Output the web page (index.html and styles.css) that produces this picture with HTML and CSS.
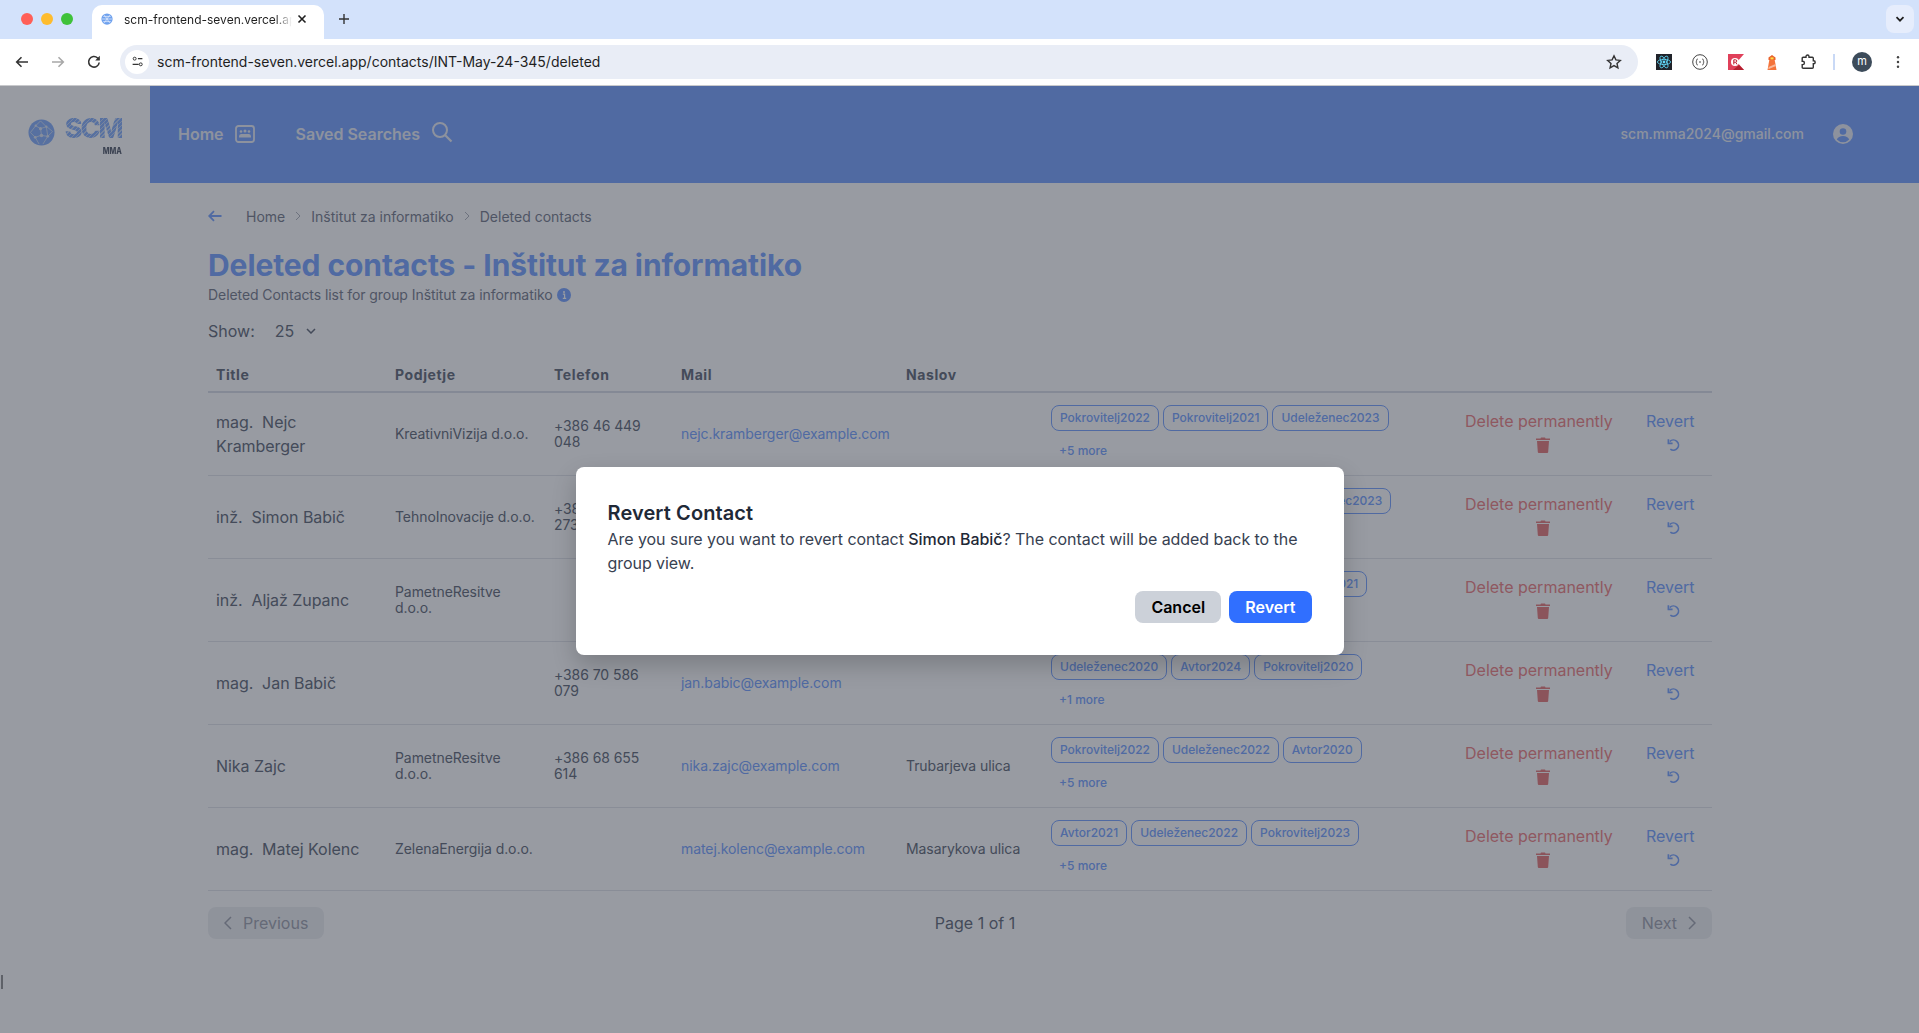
FILE: index.html
```html
<!DOCTYPE html>
<html>
<head>
  <title>Deleted contacts</title>
  <link rel="stylesheet" href="styles.css">
</head>
<body>
  <div class="browser">
    <div class="tabbar">
      <div class="lights">
        <span class="light red"></span>
        <span class="light yellow"></span>
        <span class="light green"></span>
      </div>
      <div class="tab">
        <svg class="favicon" viewBox="0 0 16 16"><circle cx="8" cy="8" r="7.500" fill="#6ea1ee"/><path d="M4.500 3l3.500 5-3.500 5M11.500 3L8 8l3.500 5M1.500 8h13M3 4.500h10M3 11.500h10" stroke="#dbe7fb" stroke-width="1.100" fill="none"/></svg>
        <span class="tab-title">scm-frontend-seven.vercel.app</span>
        <svg class="tab-close" viewBox="0 0 12 12"><path d="M2.500 2.500l7 7M9.500 2.500l-7 7" stroke="#1f1f1f" stroke-width="1.600"/></svg>
      </div>
      <svg class="tab-new" viewBox="0 0 12 12"><path d="M6 1v10M1 6h10" stroke="#333" stroke-width="1.400"/></svg>
      <div class="tab-list">
        <svg viewBox="0 0 12 12"><path d="M2.500 4.200L6 7.700l3.500-3.500" stroke="#1f1f1f" stroke-width="1.700" fill="none"/></svg>
      </div>
    </div>
    <div class="toolbar">
      <svg class="tool" viewBox="0 0 16 16"><path d="M14 8H3M7.500 3.200L2.700 8l4.800 4.800" stroke="#333" stroke-width="1.600" fill="none"/></svg>
      <svg class="tool" viewBox="0 0 16 16"><path d="M2 8h11M8.500 3.200L13.300 8l-4.800 4.800" stroke="#a8a8a8" stroke-width="1.600" fill="none"/></svg>
      <svg class="tool" viewBox="0 0 16 16"><path d="M13.200 8.500A5.300 5.300 0 1 1 11.600 4l1.600 1.500" stroke="#333" stroke-width="1.600" fill="none"/><path d="M13.800 1.800v4.600H9.200z" fill="#333"/></svg>
      <div class="omnibox">
        <span class="site-icon">
          <svg viewBox="0 0 16 16"><circle cx="4.500" cy="4.500" r="1.800" stroke="#333" stroke-width="1.200" fill="none"/><path d="M8.500 4.500H14M2 11.500h7.500" stroke="#333" stroke-width="1.400"/><circle cx="12" cy="11.500" r="1.800" stroke="#333" stroke-width="1.200" fill="none"/></svg>
        </span>
        <span class="url">scm-frontend-seven.vercel.app/contacts/INT-May-24-345/deleted</span>
        <svg class="star" viewBox="0 0 16 16"><path d="M8 1.800l1.900 4.100 4.400.5-3.300 3 .9 4.400L8 11.600l-3.900 2.200.9-4.400-3.300-3 4.400-.5z" stroke="#333" stroke-width="1.400" fill="none"/></svg>
      </div>
      <div class="extensions">
        <svg class="ext" viewBox="0 0 16 16"><rect width="16" height="16" fill="#20232a"/><g stroke="#61dafb" stroke-width=".8" fill="none"><ellipse cx="8" cy="8" rx="6.600" ry="2.600"/><ellipse cx="8" cy="8" rx="6.600" ry="2.600" transform="rotate(60 8 8)"/><ellipse cx="8" cy="8" rx="6.600" ry="2.600" transform="rotate(120 8 8)"/></g><circle cx="8" cy="8" r="1.400" fill="#61dafb"/></svg>
        <svg class="ext" viewBox="0 0 16 16"><circle cx="8" cy="8" r="7.300" stroke="#444" stroke-width="1" fill="none"/><path d="M5.800 5Q4.600 5 4.600 6.200v1.200L3.800 8l.8.600v1.200q0 1.200 1.200 1.200M10.200 5q1.200 0 1.200 1.200v1.200l.8.600-.8.600v1.200q0 1.200-1.200 1.200" stroke="#444" stroke-width=".9" fill="none"/><path d="M7 8h2" stroke="#444" stroke-width="1"/></svg>
        <svg class="ext" viewBox="0 0 16 16"><rect width="16" height="16" fill="#e0405a"/><path d="M16 0L9 8l7 8z" fill="#fff"/><path d="M5 16h11l-5-5z" fill="#b3202f"/><circle cx="7" cy="8" r="4" fill="#fff"/><path d="M5.800 10.400V5.800h1.700q1.300 0 1.300 1.200 0 1-1.200 1.200l1.400 2.200M5.800 8.200h1.600" stroke="#c0182c" stroke-width="1" fill="none"/></svg>
        <svg class="ext" viewBox="0 0 16 16"><path d="M5.500 5h5l2 11h-9z" fill="#f4733a"/><path d="M4.500 3.500L8 1l3.500 2.500V6h-7z" fill="#e9612a"/><rect x="6.500" y="3.400" width="3" height="2" fill="#fde047"/><path d="M4.600 13l7-3 .3 2-7.600 3.200z" fill="#f9b99b"/></svg>
        <svg class="ext" viewBox="0 0 16 16"><path d="M6 3.200V2.500a1.500 1.500 0 0 1 3 0v.7h3.300q1 0 1 1v2.600h.4a1.500 1.500 0 0 1 0 3h-.4v3.400q0 1-1 1H3.200q-1 0-1-1v-2.600h.5a1.500 1.500 0 0 0 0-3.400h-.5V4.200q0-1 1-1z" stroke="#333" stroke-width="1.400" fill="none"/></svg>
        <span class="ext-divider"></span>
        <span class="avatar">m</span>
        <svg class="kebab" viewBox="0 0 4 16"><circle cx="2" cy="2.500" r="1.400" fill="#444"/><circle cx="2" cy="8" r="1.400" fill="#444"/><circle cx="2" cy="13.500" r="1.400" fill="#444"/></svg>
      </div>
    </div>

    <div class="app">
      <aside class="sidebar">
        <svg class="logo-ball" viewBox="0 0 28 28">
          <circle cx="14" cy="14" r="13.500" fill="#8db4fb"/>
          <g stroke="#dfe7f5" stroke-width=".8" fill="none">
            <path d="M13 2l-5 5 5 3 6-2-6-6M8 7L2.500 14l5 5 6-2 7 1 5-5-6-5M13 10l1 7M7.500 19l4 7M20.500 18l-5 8M19 8l1.500 10"/>
          </g>
          <g fill="#dfe7f5">
            <circle cx="13" cy="10" r="1.600"/>
            <circle cx="19" cy="8" r="1.200"/>
            <circle cx="8" cy="7" r="1.200"/>
            <circle cx="14" cy="17" r="1.800"/>
            <circle cx="7.500" cy="19" r="1.400"/>
            <circle cx="20.500" cy="18" r="1.400"/>
          </g>
        </svg>
        <div class="logo-words">
          <span class="logo-scm">SCM</span>
          <span class="logo-mma">MMA</span>
        </div>
      </aside>
      <div class="main">
        <header class="topbar">
          <nav class="nav">
            <a class="nav-link">Home
              <svg class="nav-icon" viewBox="0 0 20 18"><rect x="1" y="1" width="18" height="16" rx="2.500" stroke="currentColor" stroke-width="1.800" fill="none"/><g fill="currentColor"><circle cx="6" cy="6.500" r="1.300"/><circle cx="10" cy="6" r="1.500"/><circle cx="14" cy="6.500" r="1.300"/><path d="M4 11.500q0-2.500 2-2.500h8q2 0 2 2.500v1H4z"/></g></svg>
            </a>
            <a class="nav-link">Saved Searches
              <svg class="nav-icon search" viewBox="0 0 22 22"><circle cx="9" cy="9" r="7" stroke="currentColor" stroke-width="2" fill="none"/><path d="M14 14l6.500 6.500" stroke="currentColor" stroke-width="2.200"/></svg>
            </a>
          </nav>
          <div class="account">
            <span>scm.mma2024@gmail.com</span>
            <svg class="account-icon" viewBox="0 0 20 20"><circle cx="10" cy="10" r="10" fill="currentColor"/><circle cx="10" cy="7.500" r="3.300" fill="#80a9ff"/><path d="M3.800 15.500q1.500-3.500 6.200-3.500t6.200 3.500q-2.500 2.700-6.200 2.700t-6.200-2.700z" fill="#80a9ff"/></svg>
          </div>
        </header>

        <main class="content">
          <div class="breadcrumb">
            <svg class="back" viewBox="0 0 14 12"><path d="M13.500 6H1.500M6 1.200L1.200 6 6 10.800" stroke="#80a9ff" stroke-width="1.800" fill="none"/></svg>
            <span>Home</span>
            <svg class="crumb-sep" viewBox="0 0 6 10"><path d="M1 1l4 4-4 4" stroke="#b4b8c0" fill="none"/></svg>
            <span>Inštitut za informatiko</span>
            <svg class="crumb-sep" viewBox="0 0 6 10"><path d="M1 1l4 4-4 4" stroke="#b4b8c0" fill="none"/></svg>
            <span>Deleted contacts</span>
          </div>

          <h1 class="page-title">Deleted contacts - Inštitut za informatiko</h1>
          <p class="page-sub">Deleted Contacts list for group Inštitut za informatiko
            <svg class="info" viewBox="0 0 14 14"><circle cx="7" cy="7" r="7" fill="#80a9ff"/><circle cx="7" cy="4" r="1" fill="#fff"/><path d="M5.800 6.200H7.600V10M5.800 10.300h3.400" stroke="#fff" stroke-width="1.200" fill="none"/></svg>
          </p>

          <div class="show">
            <span>Show:</span>
            <span class="show-value">25</span>
            <svg class="show-chevron" viewBox="0 0 10 6"><path d="M1 1l4 4 4-4" stroke="#6b7280" stroke-width="1.500" fill="none"/></svg>
          </div>

          <table class="contacts">
            <colgroup>
              <col class="c-title"><col class="c-company"><col class="c-phone"><col class="c-mail"><col class="c-address"><col class="c-tags"><col class="c-delete"><col class="c-revert">
            </colgroup>
            <thead>
              <tr><th>Title</th><th>Podjetje</th><th>Telefon</th><th>Mail</th><th>Naslov</th><th></th><th></th><th></th></tr>
            </thead>
            <tbody id="rows"></tbody>
          </table>

          <div class="pager">
            <button class="page-btn">
              <svg class="page-arrow" viewBox="0 0 8 14"><path d="M7 1L1 7l6 6" stroke="#a5a9b3" stroke-width="1.500" fill="none"/></svg>
              Previous
            </button>
            <span class="page-info">Page 1 of 1</span>
            <button class="page-btn">
              Next
              <svg class="page-arrow" viewBox="0 0 8 14"><path d="M1 1l6 6-6 6" stroke="#a5a9b3" stroke-width="1.500" fill="none"/></svg>
            </button>
          </div>
        </main>
      </div>
      <span class="ibeam"></span>

      <div class="overlay">
        <div class="modal">
          <h2 class="modal-title">Revert Contact</h2>
          <p class="modal-text">Are you sure you want to revert contact <span class="modal-name">Simon Babič</span>? The contact will be added back to the group view.</p>
          <div class="modal-actions">
            <button class="btn btn-cancel">Cancel</button>
            <button class="btn btn-revert">Revert</button>
          </div>
        </div>
      </div>
    </div>
  </div>

  <script>
    const contacts = [
      { title: 'mag.', name: 'Nejc Kramberger', company: 'KreativniVizija d.o.o.', phone: '+386 46 449 048', mail: 'nejc.kramberger@example.com', address: '', tags: ['Pokrovitelj2022', 'Pokrovitelj2021', 'Udeleženec2023'], more: 5 },
      { title: 'inž.', name: 'Simon Babič', company: 'TehnoInovacije d.o.o.', phone: '+386 40 882 273', mail: 'simon.babic@example.com', address: '', tags: ['Pokrovitelj2022', 'Pokrovitelj2020', 'Udeleženec2023'], more: 3 },
      { title: 'inž.', name: 'Aljaž Zupanc', company: 'PametneResitve d.o.o.', phone: '', mail: 'aljaz.zupanc@example.com', address: '', tags: ['Avtor2024', 'Udeleženec2022', 'Udeleženec2021'], more: 2 },
      { title: 'mag.', name: 'Jan Babič', company: '', phone: '+386 70 586 079', mail: 'jan.babic@example.com', address: '', tags: ['Udeleženec2020', 'Avtor2024', 'Pokrovitelj2020'], more: 1 },
      { title: '', name: 'Nika Zajc', company: 'PametneResitve d.o.o.', phone: '+386 68 655 614', mail: 'nika.zajc@example.com', address: 'Trubarjeva ulica', tags: ['Pokrovitelj2022', 'Udeleženec2022', 'Avtor2020'], more: 5 },
      { title: 'mag.', name: 'Matej Kolenc', company: 'ZelenaEnergija d.o.o.', phone: '', mail: 'matej.kolenc@example.com', address: 'Masarykova ulica', tags: ['Avtor2021', 'Udeleženec2022', 'Pokrovitelj2023'], more: 5 }
    ];

    const trash = '<svg class="act-icon trash" viewBox="0 0 14 16"><path d="M4.500 1.500L5 .5h4l.5 1H14V3H0V1.500zM1 4h12l-.8 11q-.1 1-1 1H2.800q-.9 0-1-1z" fill="currentColor"/></svg>';
    const undo = '<svg class="act-icon undo" viewBox="0 0 14 14"><path d="M3 3.200A5.500 5.500 0 1 1 3.600 11.500" stroke="currentColor" stroke-width="1.800" fill="none"/><path d="M1.500 .8v4.500H6" stroke="currentColor" stroke-width="1.800" fill="none"/></svg>';

    document.getElementById('rows').innerHTML = contacts.map(c => `
      <tr>
        <td class="cell-name">${c.title ? c.title + '&nbsp; ' : ''}${c.name}</td>
        <td class="cell-small">${c.company}</td>
        <td class="cell-small">${c.phone}</td>
        <td class="cell-mail">${c.mail}</td>
        <td class="cell-small">${c.address}</td>
        <td>
          <div class="tags">${c.tags.map(t => `<span class="tag">${t}</span>`).join('')}</div>
          <div class="more">+${c.more} more</div>
        </td>
        <td><div class="action delete">Delete permanently ${trash}</div></td>
        <td><div class="action revert">Revert ${undo}</div></td>
      </tr>`).join('');
  </script>
</body>
</html>
```

FILE: styles.css
```css
* {
  box-sizing: border-box;
}
body {
  margin: 0;
  font-family: Inter, "Noto Sans", sans-serif;
  background: #fff;
}
.browser {
  width: 1919px;
  height: 1033px;
  display: flex;
  flex-direction: column;
  overflow: hidden;
}

/* browser chrome */
.tabbar {
  height: 39px;
  background: #d3e2fb;
  display: flex;
  align-items: flex-end;
  flex-shrink: 0;
}
.lights {
  display: flex;
  gap: 8px;
  padding: 0 0 14px 21px;
  width: 92px;
}
.light {
  width: 12px;
  height: 12px;
  border-radius: 50%;
}
.light.red { background: #ff5f57; }
.light.yellow { background: #febc2e; }
.light.green { background: #3fc23a; }
.tab {
  width: 232px;
  height: 34px;
  background: #fff;
  border-radius: 10px 10px 0 0;
  display: flex;
  align-items: center;
  padding: 0 10px 6px 9px;
}
.favicon {
  width: 12px;
  height: 12px;
  margin: 0 11px 0 0;
  flex-shrink: 0;
}
.tab-title {
  font-size: 12px;
  color: #1f1f1f;
  width: 168px;
  white-space: nowrap;
  overflow: hidden;
  -webkit-mask-image: linear-gradient(90deg, #000 90%, transparent);
  mask-image: linear-gradient(90deg, #000 90%, transparent);
}
.tab-close {
  width: 12px;
  height: 12px;
  margin-left: 4px;
}
.tab-new {
  width: 12px;
  height: 12px;
  margin: 0 0 14px 14px;
}
.tab-list {
  width: 28px;
  height: 28px;
  margin: 0 5px 6px auto;
  background: #e6edfc;
  border-radius: 8px;
  display: flex;
  align-items: center;
  justify-content: center;
}
.tab-list svg {
  width: 12px;
  height: 12px;
}
.toolbar {
  height: 47px;
  background: #fff;
  border-bottom: 1px solid #c8c9cc;
  display: flex;
  align-items: center;
  padding: 0 0 1px 14px;
  flex-shrink: 0;
}
.tool {
  width: 16px;
  height: 16px;
  margin-right: 20px;
}
.omnibox {
  width: 1518px;
  height: 34px;
  margin-left: -2px;
  background: #e9edf6;
  border-radius: 17px;
  display: flex;
  align-items: center;
  padding: 0 16px 0 5px;
}
.site-icon {
  width: 24px;
  height: 24px;
  background: #fff;
  border-radius: 50%;
  display: flex;
  align-items: center;
  justify-content: center;
  margin-right: 8px;
}
.site-icon svg {
  width: 13px;
  height: 13px;
}
.url {
  font-size: 14px;
  color: #1f1f1f;
  flex: 1;
}
.star {
  width: 16px;
  height: 16px;
}
.extensions {
  display: flex;
  align-items: center;
  padding-left: 18px;
}
.ext {
  width: 16px;
  height: 16px;
  margin-right: 20px;
}
.ext-divider {
  width: 2px;
  height: 16px;
  background: #c9d9f6;
  margin: 0 17px 0 -3px;
}
.avatar {
  width: 20px;
  height: 20px;
  border-radius: 50%;
  background: #3c4b5a;
  color: #fff;
  font-size: 11px;
  text-align: center;
  line-height: 19px;
}
.kebab {
  width: 4px;
  height: 14px;
  margin-left: 24px;
}

/* app */
.app {
  flex: 1;
  display: flex;
  position: relative;
  min-height: 0;
}
.sidebar {
  width: 150px;
  height: 97px;
  display: flex;
  align-items: flex-start;
  padding: 33px 0 0 28px;
  flex-shrink: 0;
  gap: 9px;
}
.logo-ball {
  width: 27px;
  height: 27px;
  flex-shrink: 0;
}
.logo-words {
  display: flex;
  flex-direction: column;
  align-items: flex-end;
  margin-top: -4px;
  width: 58px;
}
.logo-scm {
  font-size: 27px;
  font-weight: 800;
  line-height: 28px;
  letter-spacing: -2px;
  color: transparent;
  background: repeating-linear-gradient(135deg, #8db4fb 0 2px, #c4d6f7 2px 3px);
  -webkit-background-clip: text;
  background-clip: text;
}
.logo-mma {
  font-size: 9px;
  font-weight: 800;
  line-height: 10px;
  color: #5f6675;
  transform: scaleX(.8);
  transform-origin: right center;
  margin-top: 3px;
}
.main {
  flex: 1;
  min-width: 0;
}
.topbar {
  height: 97px;
  background: #80a9ff;
  display: flex;
  align-items: center;
  justify-content: space-between;
  padding: 0 66px 2px 28px;
  color: #ecf0f8;
}
.nav {
  display: flex;
  gap: 41px;
}
.nav-link {
  display: flex;
  align-items: center;
  font-size: 16px;
  font-weight: 600;
  gap: 11px;
}
.nav-icon {
  width: 20px;
  height: 18px;
}
.nav-icon.search {
  width: 22px;
  height: 22px;
  margin-top: -4px;
}
.account {
  display: flex;
  align-items: center;
  font-size: 14px;
  font-weight: 500;
  gap: 29px;
}
.account-icon {
  width: 20px;
  height: 20px;
}
.content {
  padding: 23px 207px 0 58px;
}
.breadcrumb {
  display: flex;
  align-items: center;
  height: 20px;
  font-size: 14px;
  color: #7f8593;
}
.back {
  width: 14px;
  height: 12px;
  margin-right: 24px;
}
.crumb-sep {
  width: 6px;
  height: 10px;
  margin: 0 10px;
}
.page-title {
  margin: 21px 0 0;
  font-size: 30px;
  line-height: 36px;
  font-weight: 700;
  letter-spacing: -.08px;
  color: #80a9ff;
}
.page-sub {
  margin: 2px 0 0;
  font-size: 14px;
  line-height: 20px;
  letter-spacing: -.07px;
  color: #7f8593;
  display: flex;
  align-items: center;
  gap: 4px;
}
.info {
  width: 14px;
  height: 14px;
}
.show {
  display: flex;
  align-items: center;
  height: 24px;
  margin-top: 14px;
  font-size: 16px;
  color: #6b7280;
}
.show-value {
  margin-left: 20px;
}
.show-chevron {
  width: 10px;
  height: 6px;
  margin-left: 12px;
}

/* table */
.contacts {
  width: 1504px;
  table-layout: fixed;
  border-collapse: collapse;
  margin-top: 15px;
}
.c-title { width: 179px; }
.c-company { width: 159px; }
.c-phone { width: 127px; }
.c-mail { width: 225px; }
.c-address { width: 145px; }
.c-tags { width: 414px; }
.c-delete { width: 181px; }
.c-revert { width: 74px; }
th {
  text-align: left;
  padding: 0 8px;
  height: 34px;
  font-size: 14px;
  font-weight: 700;
  letter-spacing: .6px;
  color: #6b7280;
  border-bottom: 2px solid #dce0e8;
}
td {
  padding: 0 8px;
  height: 83px;
  border-bottom: 1px solid #e5e7eb;
  vertical-align: middle;
}
.cell-name {
  font-size: 16px;
  line-height: 24px;
  letter-spacing: -.05px;
  color: #6b7280;
}
.cell-small {
  font-size: 14px;
  line-height: 16px;
  letter-spacing: -.07px;
  color: #6b7280;
}
.cell-mail {
  font-size: 14px;
  letter-spacing: -.07px;
  color: #80a9ff;
}
.tags {
  display: flex;
  gap: 4px;
  margin-top: -4px;
}
.tag {
  height: 26px;
  padding: 0 8px;
  border: 1px solid #80a9ff;
  border-radius: 8px;
  color: #80a9ff;
  font-size: 12px;
  font-weight: 500;
  line-height: 24px;
}
.more {
  font-size: 12px;
  font-weight: 500;
  line-height: 16px;
  color: #80a9ff;
  padding: 12px 0 0 8px;
}
.action {
  display: flex;
  flex-direction: column;
  align-items: center;
  width: max-content;
  margin-top: -6px;
  font-size: 16px;
  line-height: 24px;
}
.delete {
  color: #f08a8c;
}
.revert {
  color: #80a9ff;
}
.act-icon {
  display: block;
  margin-top: 4px;
}
.trash {
  width: 14px;
  height: 16px;
  margin-left: 9px;
}
.undo {
  width: 13px;
  height: 14px;
  margin: 5px 0 1px 7px;
}
.delete .trash {
  color: #e98383;
}

/* pagination */
.pager {
  display: flex;
  justify-content: space-between;
  align-items: center;
  margin-top: 16px;
}
.page-btn {
  height: 32px;
  padding: 0 16px;
  display: flex;
  align-items: center;
  gap: 11px;
  border: none;
  border-radius: 8px;
  background: #f0f1f3;
  color: #a5a9b3;
  font-family: inherit;
  font-size: 16px;
}
.page-arrow {
  width: 8px;
  height: 14px;
}
.page-info {
  font-size: 16px;
  color: #6b7280;
}
.ibeam {
  position: absolute;
  left: 1px;
  top: 889px;
  width: 2px;
  height: 14px;
  background: #999;
}

/* modal */
.overlay {
  position: absolute;
  inset: 0;
  background: rgba(17, 24, 39, 0.43);
  display: flex;
  align-items: center;
  justify-content: center;
  padding-top: 3px;
}
.modal {
  width: 768px;
  background: #fff;
  border-radius: 8px;
  padding: 32px;
  box-shadow: 0 10px 25px rgba(0, 0, 0, 0.2);
}
.modal-title {
  margin: 0;
  font-size: 20px;
  line-height: 28px;
  font-weight: 600;
  letter-spacing: .1px;
  color: #1f2937;
}
.modal-text {
  margin: 0;
  font-size: 16px;
  line-height: 24px;
  letter-spacing: -.06px;
  color: #374151;
}
.modal-name {
  font-weight: 500;
  color: #1f2937;
}
.modal-actions {
  display: flex;
  justify-content: flex-end;
  gap: 8px;
  margin-top: 16px;
}
.btn {
  height: 32px;
  padding: 0 16px;
  border: none;
  border-radius: 8px;
  font-family: inherit;
  font-size: 16px;
  font-weight: 600;
}
.btn-cancel {
  width: 86px;
  padding: 0;
  background: #ccd1d9;
  color: #000;
}
.btn-revert {
  background: #306fff;
  color: #fff;
}
```
